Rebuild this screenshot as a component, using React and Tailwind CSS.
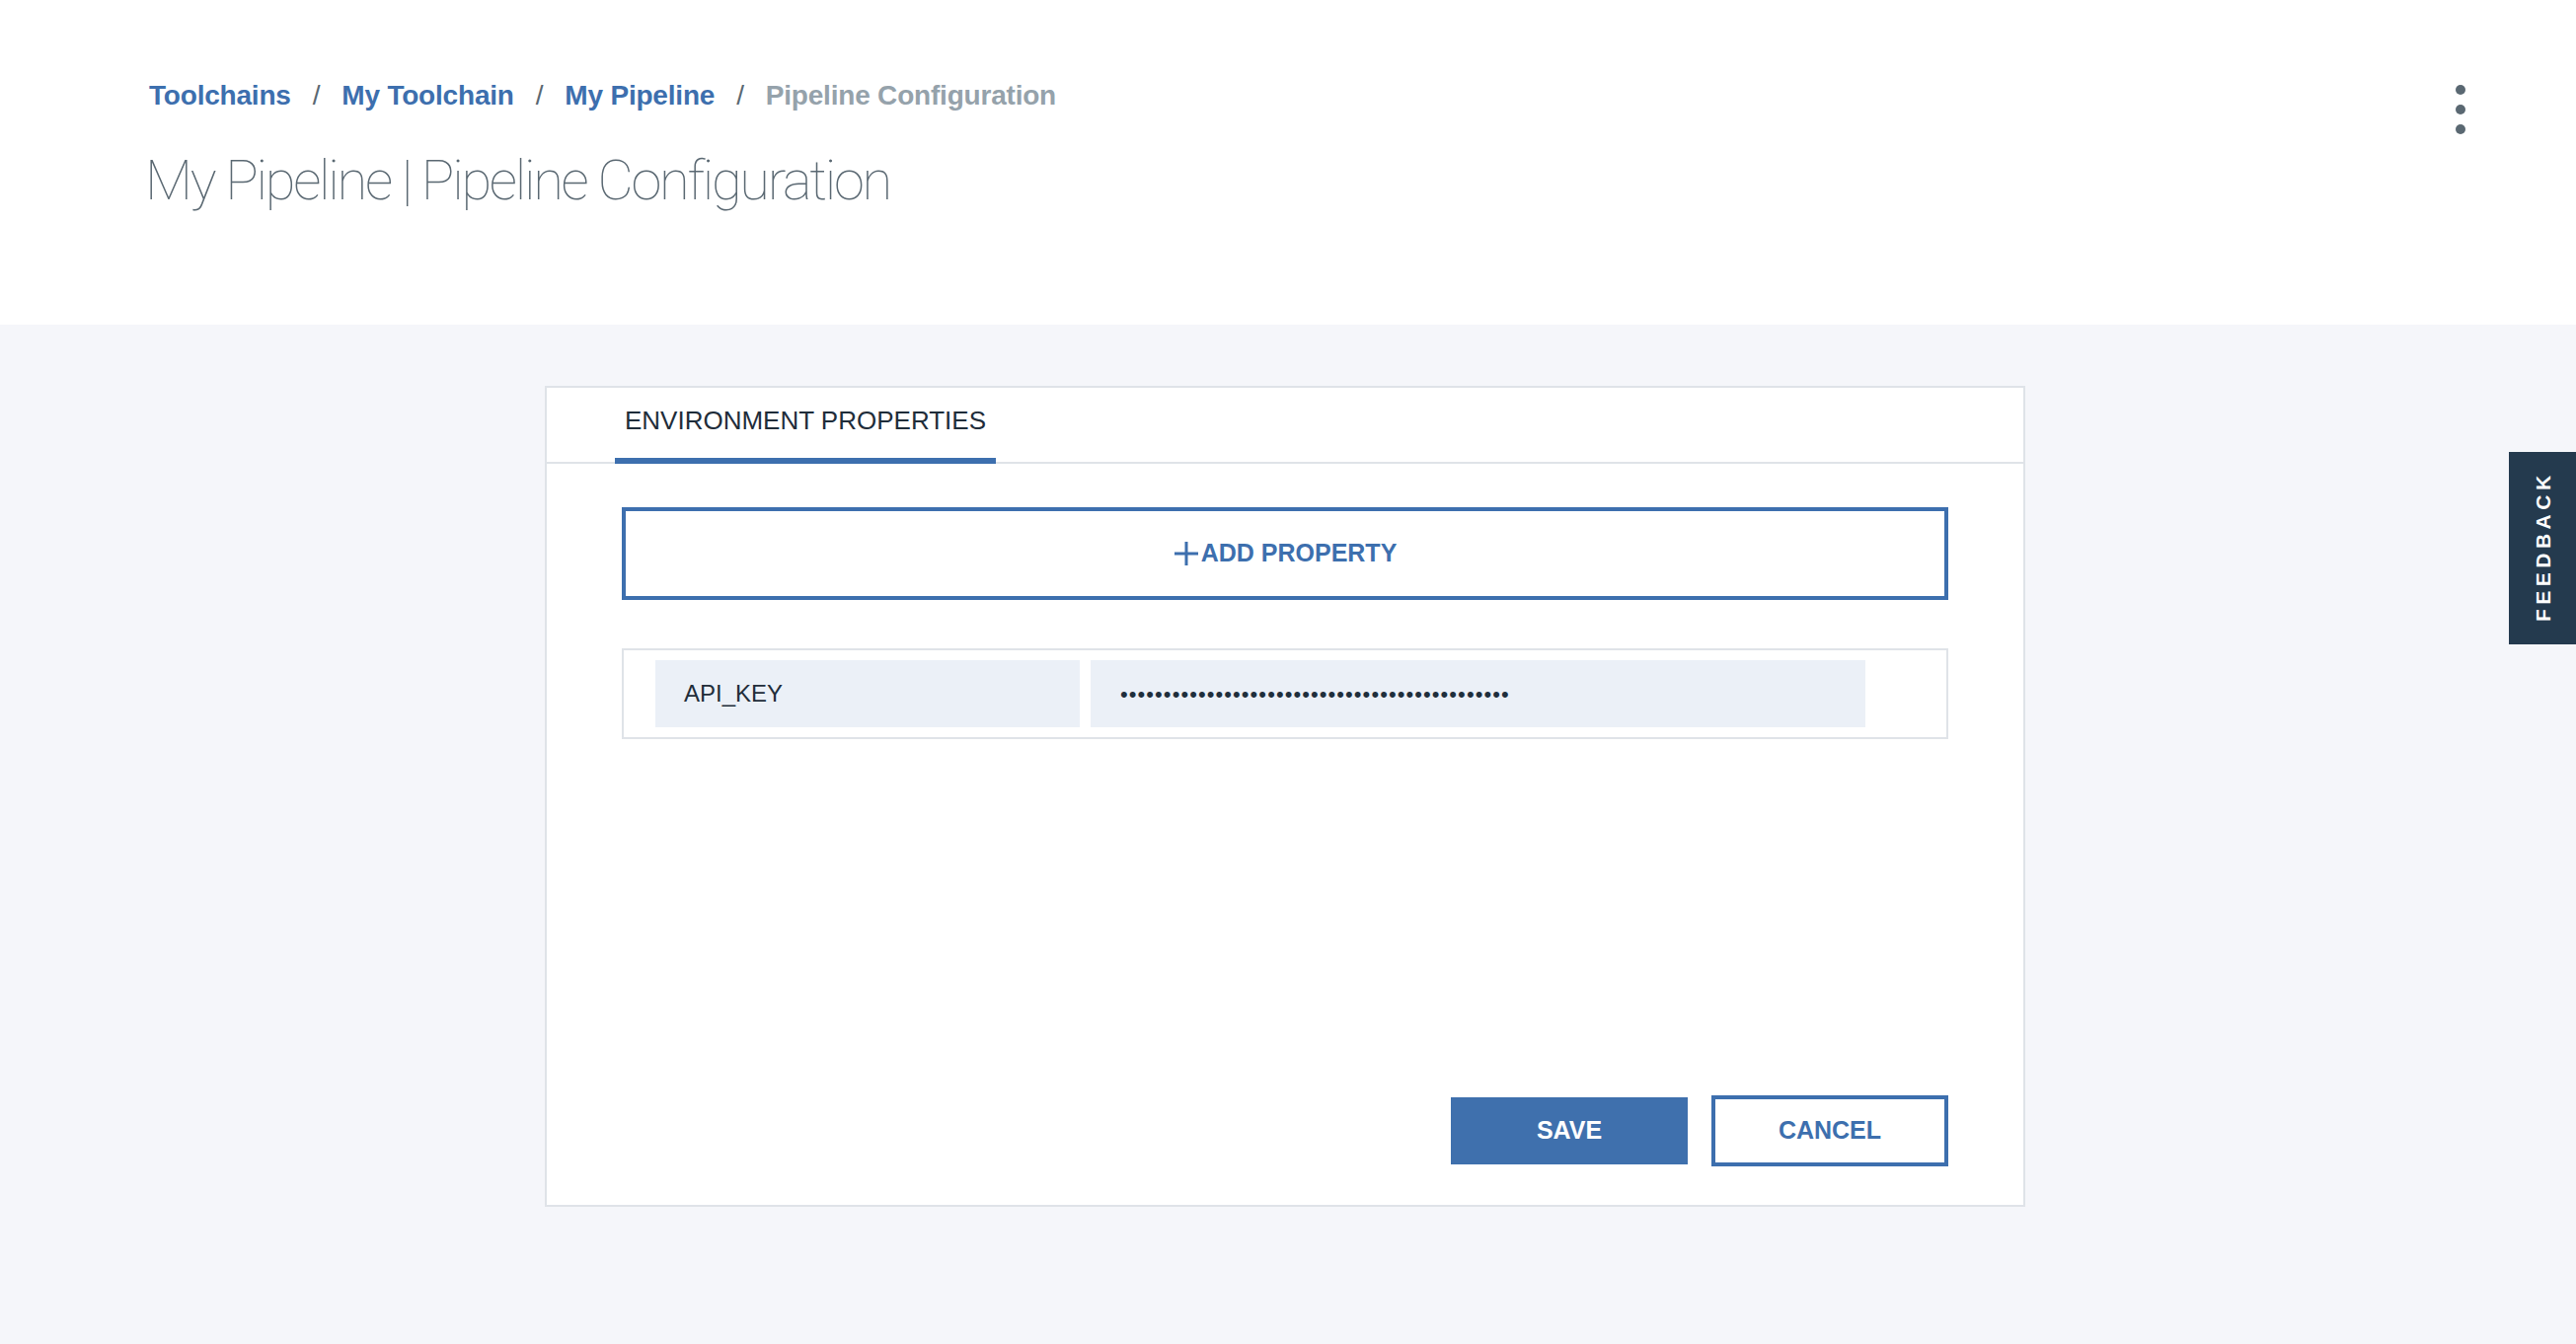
import React from "react";

const BLUE = "text-[#3d6fae]";

function Breadcrumbs() {
  const links = ["Toolchains", "My Toolchain", "My Pipeline"];
  return (
    <nav className="flex items-center text-[28px] leading-[36px] font-bold tracking-[-0.2px]">
      {links.map((label) => (
        <React.Fragment key={label}>
          <a href="#" className={BLUE}>
            {label}
          </a>
          <span className="mx-[22px] font-normal text-[#5a6872]">/</span>
        </React.Fragment>
      ))}
      <span className="text-[#95a2ab]">Pipeline Configuration</span>
    </nav>
  );
}

function Header() {
  return (
    <header className="flex h-[329px] justify-between bg-white pl-[151px] pr-[112px]">
      <div className="pt-[79px]">
        <Breadcrumbs />
        <h1 className="-ml-[4px] mt-[40px] font-['Roboto',sans-serif] text-[56px] font-thin leading-[56px] tracking-[-2.3px] text-[#5a6872]">
          My Pipeline | Pipeline Configuration
        </h1>
      </div>
      <button className="mt-[86px] flex h-[52px] flex-col gap-[10px]" aria-label="More">
        <span className="h-[10px] w-[10px] rounded-full bg-[#5a6872]" />
        <span className="h-[10px] w-[10px] rounded-full bg-[#5a6872]" />
        <span className="h-[10px] w-[10px] rounded-full bg-[#5a6872]" />
      </button>
    </header>
  );
}

function PropertyRow() {
  return (
    <div className="mt-[49px] flex h-[92px] items-center gap-[11px] border-2 border-[#dfe3e8] pl-[32px]">
      <div className="flex h-[68px] w-[430px] items-center bg-[#ebf0f7] pl-[29px] text-[24px] text-[#1f2d3a]">
        API_KEY
      </div>
      <div className="flex h-[68px] w-[785px] items-center bg-[#ebf0f7] pl-[30px] text-[22px] tracking-[1.07px] text-[#1f2f3c]">
        {"•".repeat(45)}
      </div>
    </div>
  );
}

export default function App() {
  return (
    <div className="relative min-h-screen bg-[#f5f6fa] font-['Liberation_Sans',Arial,sans-serif]">
      <Header />

      <main className="pt-[62px]">
        <section className="ml-[552px] flex h-[832px] w-[1500px] flex-col border-2 border-[#dfe3e8] bg-white">
          <div className="flex h-[77px] border-b-2 border-[#dfe3e8]">
            <div className="-mb-[2px] ml-[69px] flex w-[386px] items-center justify-center border-b-[6px] border-[#3d6fae] pb-[4px] text-[26px] text-[#1f2d3a]">
              ENVIRONMENT PROPERTIES
            </div>
          </div>

          <div className="flex flex-1 flex-col px-[76px] pb-[39px]">
            <button className="mt-[44px] flex h-[94px] items-center justify-center border-4 border-[#3d6fae] text-[25px] font-bold text-[#3d6fae]">
              <svg width="26" height="26" viewBox="0 0 26 26" className="mr-[2px]">
                <path d="M13 1v24M1 13h24" stroke="#3d6fae" strokeWidth="3" />
              </svg>
              ADD PROPERTY
            </button>

            <PropertyRow />

            <div className="mt-auto flex items-center justify-end gap-[24px]">
              <button className="h-[68px] w-[240px] bg-[#3f70ad] text-[25px] font-bold text-white">
                SAVE
              </button>
              <button className="h-[72px] w-[240px] border-4 border-[#3d6fae] bg-white text-[25px] font-bold text-[#3d6fae]">
                CANCEL
              </button>
            </div>
          </div>
        </section>
      </main>

      <div className="absolute right-0 top-[458px] flex h-[195px] w-[68px] items-center justify-center bg-[#243a4e]">
        <span className="-rotate-90 whitespace-nowrap pl-[4px] text-[21px] font-bold tracking-[4.5px] text-white">
          FEEDBACK
        </span>
      </div>
    </div>
  );
}
